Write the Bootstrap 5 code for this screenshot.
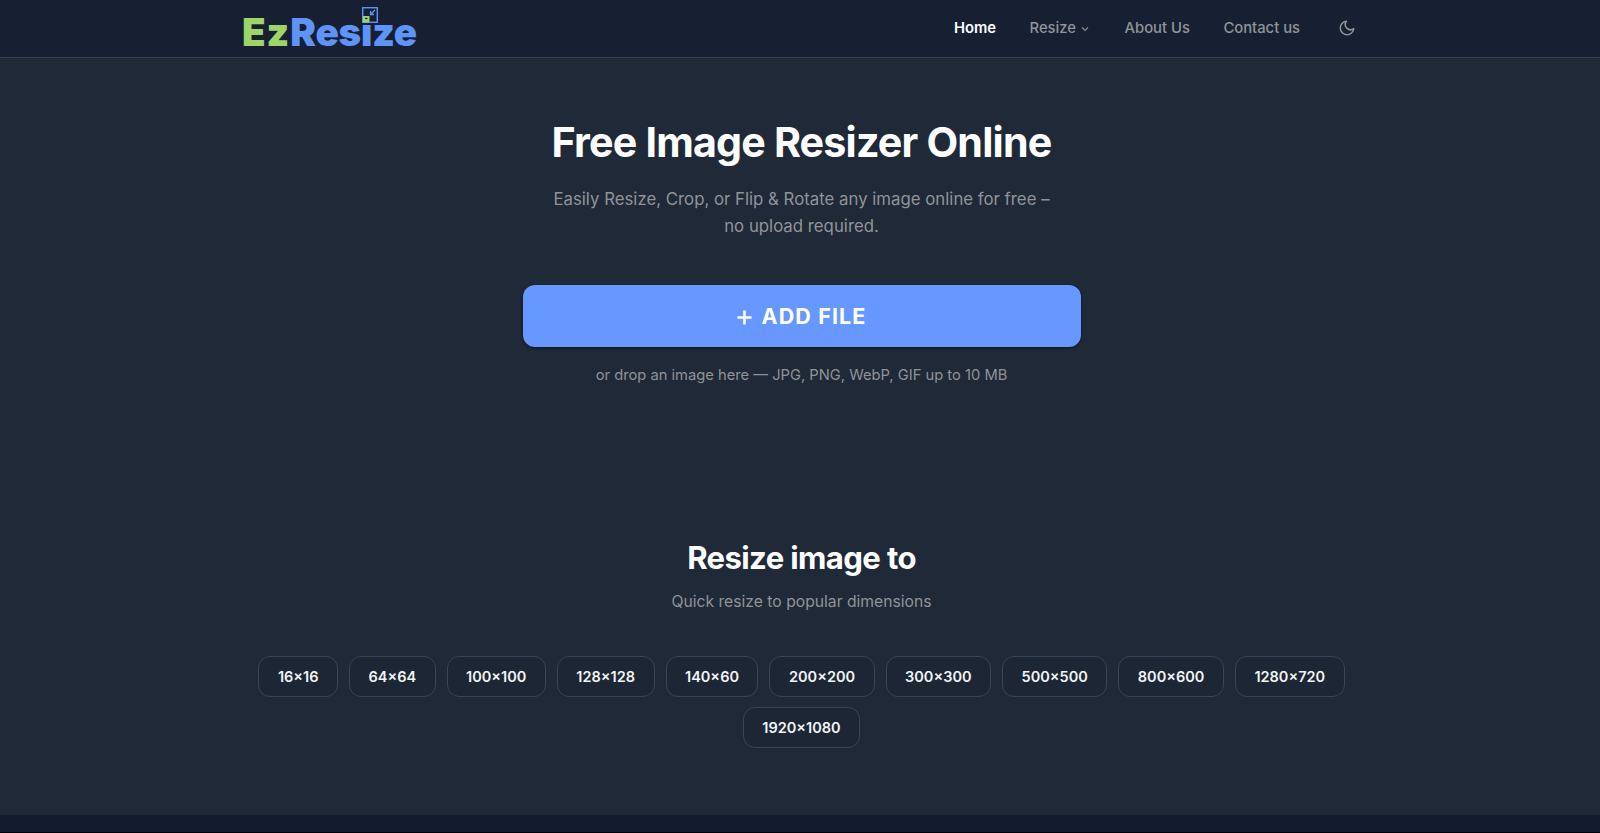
<!DOCTYPE html>
<html lang="en">
<head>
  <meta charset="UTF-8">
  <meta name="viewport" content="width=device-width, initial-scale=1">
  <title>EzResize - Free Image Resizer Online</title>
  <link href="https://cdn.jsdelivr.net/npm/bootstrap@5.3.2/dist/css/bootstrap.min.css" rel="stylesheet">
  <style>
    html, body { height: 100%; }
    body {
      background-color: #1f2937;
      font-family: Inter, "Liberation Sans", sans-serif;
      color: #fff;
      overflow: hidden;
    }
    .top-nav {
      height: 58px;
      background-color: #162032;
      border-bottom: 1px solid #374151;
    }
    .wrap { width: 1114px; margin-left: 242px; }
    .logo {
      font-size: 38.5px;
      font-weight: 900;
      line-height: 1;
      text-decoration: none;
      padding-top: 8px;
    }
    .logo .ez { color: #9ed468; letter-spacing: 1px; }
    .logo .rz { color: #5f93f7; letter-spacing: -.2px; }
    .logo svg { position: absolute; left: 120px; top: 2px; }
    .nav-item-link {
      color: #929499;
      font-size: 14.8px;
      font-weight: 500;
      text-decoration: none;
      margin-right: 33.5px;
    }
    .nav-item-link.active { color: #fff; font-weight: 600; }
    .nav-item-link.has-caret { margin-right: 34.5px; }
    .nav-item-link.last { margin-right: 38px; }
    .moon { margin-top: -1px; }
    .hero { padding-top: 60px; padding-left: 3px; }
    .hero h1 {
      font-size: 41.2px;
      font-weight: 700;
      letter-spacing: -.82px;
      line-height: 48px;
      margin-bottom: 20px;
    }
    .hero p.lead-text {
      color: #919398;
      font-size: 16.8px;
      line-height: 27px;
      width: 520px;
      margin-bottom: 45px;
    }
    .add-btn {
      width: 558px;
      height: 62px;
      background-color: #6698ff;
      border: 0;
      border-radius: 12px;
      color: #fff;
      font-size: 21.5px;
      font-weight: 700;
      letter-spacing: 1.1px;
      box-shadow: 0 1px 3px rgba(0,0,0,.5);
    }
    .add-btn svg { margin-right: 10px; vertical-align: -1px; }
    .add-btn:hover { background-color: #6698ff; color: #fff; }
    .drop-hint { color: #919398; font-size: 14.72px; margin-top: 17px; line-height: 22px; }
    .sizes { padding-top: 152px; padding-left: 3px; }
    .sizes h2 { font-size: 31.1px; font-weight: 700; letter-spacing: -.62px; line-height: 40px; margin-bottom: 12px; }
    .sizes .sub { color: #919398; font-size: 15.7px; line-height: 24px; margin-bottom: 42px; }
    .chips { width: 1100px; gap: 9.5px 11px; }
    .chip {
      height: 41px;
      padding: 0 18.5px;
      background-color: #1c2634;
      border: 1px solid #3a4655;
      border-radius: 12px;
      color: #f3f4f6;
      font-size: 14.5px;
      font-weight: 600;
      line-height: 39px;
    }
    .chip:hover { background-color: #1c2634; border-color: #3a4655; color: #f3f4f6; }
    .foot {
      position: fixed;
      left: 0; right: 0; bottom: 0;
      height: 18px;
      background-color: #131c2e;
      border-bottom: 1px solid #000;
    }
  </style>
</head>
<body>
  <nav class="top-nav d-flex align-items-center">
    <div class="wrap d-flex align-items-center justify-content-between">
      <a href="#" class="logo position-relative d-inline-block">
        <span class="ez">Ez</span><span class="rz">Resize</span>
        <svg width="16" height="16" viewBox="0 0 16 16" aria-hidden="true">
          <rect x=".7" y=".7" width="14.6" height="14.6" fill="#162032" stroke="#5f93f7" stroke-width="1.4"/>
          <rect x="1" y="9" width="6.5" height="6.5" fill="#9ed468"/>
          <path d="M3 11.5 H5.5" stroke="#162032" stroke-width="1.2"/>
          <path d="M13 3 L8.5 7.5 M8.5 4 V7.5 H12" fill="none" stroke="#5f93f7" stroke-width="1.3"/>
        </svg>
      </a>
      <div class="d-flex align-items-center">
        <a href="#" class="nav-item-link active">Home</a>
        <a href="#" class="nav-item-link has-caret d-flex align-items-center">Resize
          <svg class="ms-1" width="10" height="10" viewBox="0 0 10 10" aria-hidden="true"><path d="M2 3.4 L5 6.4 L8 3.4" fill="none" stroke="#929499" stroke-width="1.2"/></svg>
        </a>
        <a href="#" class="nav-item-link">About Us</a>
        <a href="#" class="nav-item-link last">Contact us</a>
        <svg class="moon" width="18" height="18" viewBox="0 0 24 24" aria-hidden="true"><path d="M21 12.8A9 9 0 1 1 11.2 3a7 7 0 0 0 9.8 9.8z" fill="none" stroke="#929499" stroke-width="2" stroke-linecap="round" stroke-linejoin="round"/></svg>
      </div>
    </div>
  </nav>

  <main>
    <section class="hero d-flex flex-column align-items-center text-center">
      <h1>Free Image Resizer Online</h1>
      <p class="lead-text">Easily Resize, Crop, or Flip &amp; Rotate any image online for free – no upload required.</p>
      <button type="button" class="btn add-btn"><svg width="15" height="15" viewBox="0 0 15 15" aria-hidden="true"><path d="M7.5 .5 V14.5 M.5 7.5 H14.5" stroke="#fff" stroke-width="2.6"/></svg>ADD FILE</button>
      <div class="drop-hint">or drop an image here — JPG, PNG, WebP, GIF up to 10 MB</div>
    </section>
    <section class="sizes d-flex flex-column align-items-center text-center">
      <h2>Resize image to</h2>
      <div class="sub">Quick resize to popular dimensions</div>
      <div class="chips d-flex flex-wrap justify-content-center" id="chips"></div>
    </section>
  </main>
  <div class="foot"></div>

  <script>
    const sizes = ['16×16','64×64','100×100','128×128','140×60','200×200','300×300','500×500','800×600','1280×720','1920×1080'];
    const chips = document.getElementById('chips');
    sizes.forEach(s => {
      const b = document.createElement('a');
      b.href = '#';
      b.className = 'btn chip';
      b.textContent = s;
      chips.appendChild(b);
    });
  </script>
  <script src="https://cdn.jsdelivr.net/npm/bootstrap@5.3.2/dist/js/bootstrap.bundle.min.js"></script>
</body>
</html>
